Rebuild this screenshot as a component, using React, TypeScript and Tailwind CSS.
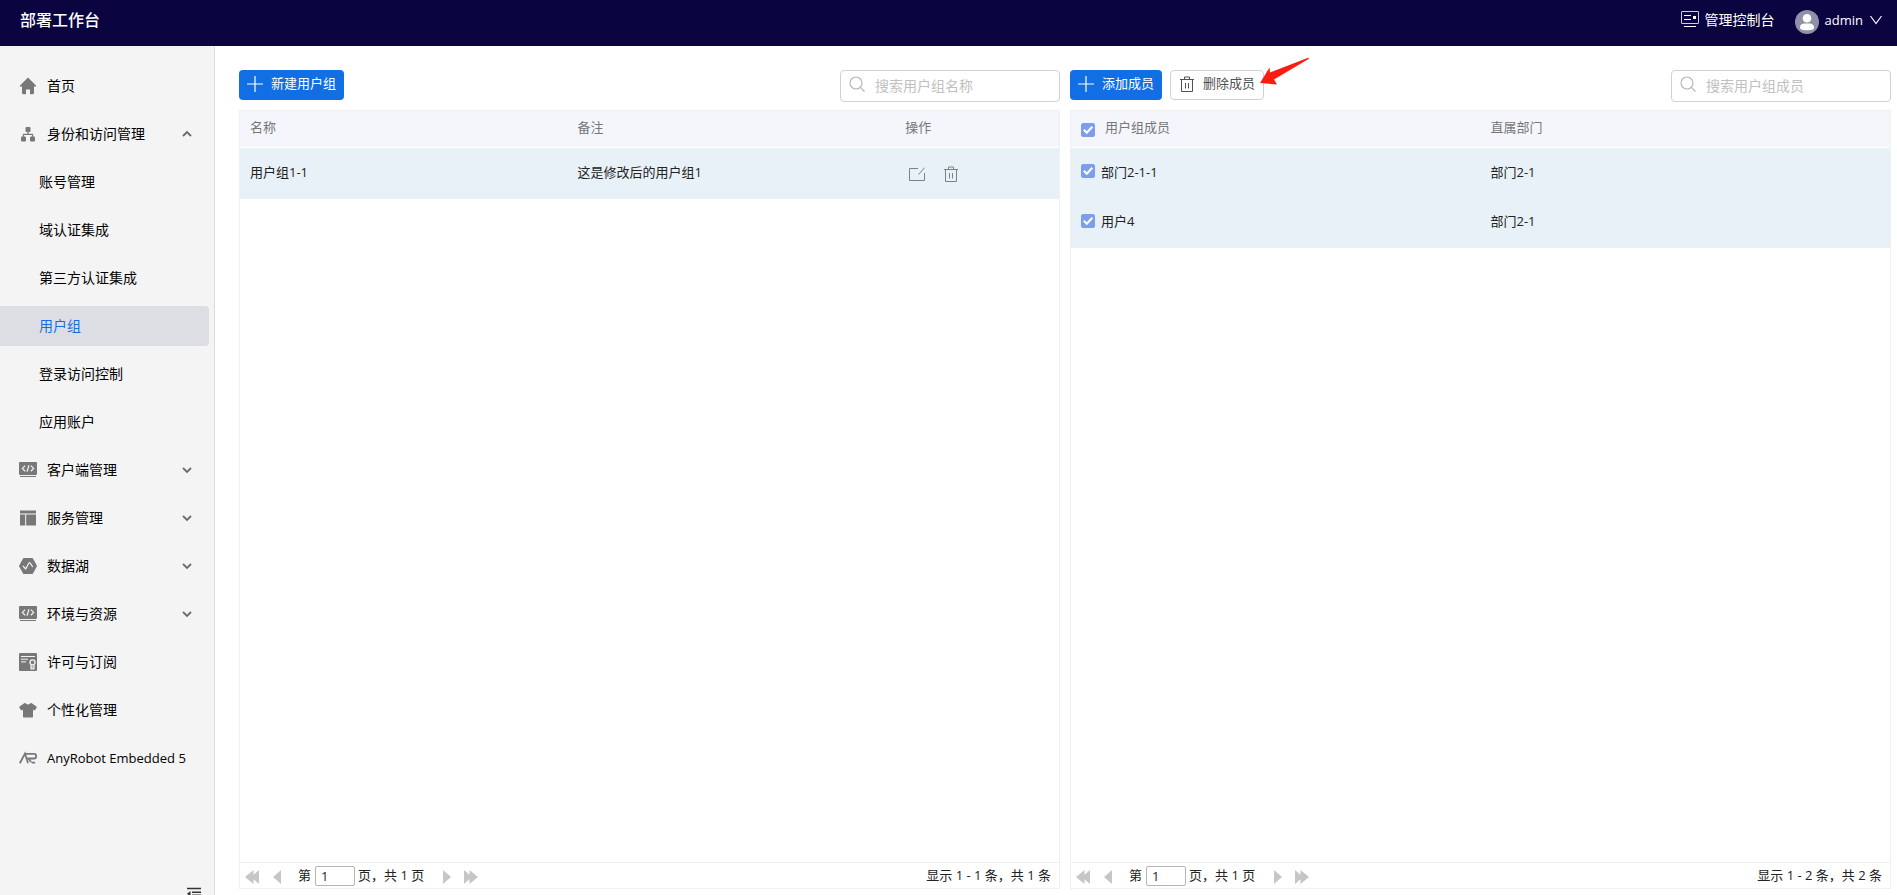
import React, { useState } from 'react';

type IconProps = { className?: string };

const svg = (size: number, className?: string) => ({
  width: size,
  height: size,
  viewBox: `0 0 ${size} ${size}`,
  className: `shrink-0 ${className ?? ''}`,
  'aria-hidden': true,
});

const HomeIcon = () => (
  <svg {...svg(18)} fill="currentColor">
    <path d="M9 .5 1 8.6c-.3.4-.2 1 .4 1H3V16c0 .7.4 1.2 1 1.2h3V12.4h4v4.800h3c.6 0 1-.5 1-1.2V9.600h1.600c.6 0 .7-.6.4-1z" />
  </svg>
);
const OrgIcon = () => (
  <svg {...svg(18)} fill="currentColor">
    <rect x="6.500" y="2" width="5" height="5" rx="1" />
    <rect x="2" y="11.500" width="5" height="5" rx="1" />
    <rect x="11" y="11.500" width="5" height="5" rx="1" />
    <path d="M9 6v3.300M4.500 12V9.300h9V12" fill="none" stroke="currentColor" strokeWidth="1.200" />
  </svg>
);
const CodeIcon = () => (
  <svg {...svg(18)} fill="none">
    <rect y="1" width="18" height="13" rx="1" fill="currentColor" />
    <path d="M1 15.500h16" stroke="currentColor" strokeWidth="1" />
    <path d="M6.200 4.600 3.300 7.400l2.900 2.800M11.800 4.600l2.900 2.800-2.900 2.800M10 4.200 8 10.700" stroke="#f4f4f4" strokeWidth="1.200" />
  </svg>
);
const LayoutIcon = () => (
  <svg {...svg(18)} fill="currentColor">
    <path d="M1 1.500h16v3H1zM1 5.600h5.200v11H1zM7.200 5.600H17v11H7.200z" />
  </svg>
);
const LakeIcon = () => (
  <svg {...svg(18)} fill="none">
    <path d="M5 1h8c.5 0 .8.2 1 .6l3.700 6.600c.3.5.3 1 0 1.500L14 16.400c-.2.4-.5.6-1 .6H5c-.5 0-.8-.2-1-.6L.3 9.700c-.3-.5-.3-1 0-1.500L4 1.600C4.200 1.200 4.500 1 5 1z" fill="currentColor" />
    <path d="m4 9 2.700 3L10 5.800c.2-.4.7-.4 1 0L13.800 10" stroke="#f4f4f4" strokeWidth="1.200" />
  </svg>
);
const LicenseIcon = () => (
  <svg {...svg(18)} fill="none">
    <rect width="18" height="18" rx="1" fill="currentColor" />
    <path d="M2 3.500h14M2 6.200h7M2 8.900h5" stroke="#f4f4f4" strokeWidth="1" />
    <circle cx="13.500" cy="9.300" r="2.500" stroke="#f4f4f4" strokeWidth="1.300" />
    <path d="M12 11.500v4.300h3v-4.300M12 14h3" stroke="#f4f4f4" strokeWidth="1.200" />
  </svg>
);
const ShirtIcon = () => (
  <svg {...svg(18)} fill="currentColor">
    <path d="M5.500 2 .6 5.400c-.5.3-.6.8-.3 1.200l1.600 2.500c.2.4.6.4 1 .2L4 8.700V15.500c0 .6.4 1 1 1h8c.6 0 1-.4 1-1V8.700l1.100.6c.4.2.8.2 1-.2l1.600-2.500c.3-.4.2-.9-.3-1.200L12.500 2c-.8 0-1.300.2-1.700.7-.9.9-2.700.9-3.600 0C6.800 2.200 6.300 2 5.500 2z" />
  </svg>
);
const RobotIcon = () => (
  <svg {...svg(18)} fill="none" stroke="currentColor" strokeWidth="1.800">
    <path d="M.8 14.300 6 4.600 9 14.300M6 4.900h9.300c2.400 0 2.400 4.600 0 4.600H9.500l2.500 3.500M12.500 13.600h3.700" />
  </svg>
);
const Chevron = ({ up }: { up?: boolean }) => (
  <svg {...svg(10)} fill="none" stroke="#6b6b6b" strokeWidth="1.800">
    <path d={up ? 'M1 7l4-4 4 4' : 'M1 3l4 4 4-4'} />
  </svg>
);
const ConsoleIcon = () => (
  <svg {...svg(18)} fill="none" stroke="#fff" strokeWidth="1">
    <rect x=".5" y=".5" width="17" height="12" rx=".5" stroke="#cfcfdc" />
    <path d="M3 4.500h7M3 8.500h7M3 15.500h12" />
    <rect x="12" y="5" width="3" height="3" fill="#fff" stroke="none" />
  </svg>
);
const PlusIcon = () => (
  <svg {...svg(16)} fill="none" stroke="#fff" strokeWidth="1.200">
    <path d="M8 0v16M0 8h16" />
  </svg>
);
const TrashIcon = ({ className }: IconProps) => (
  <svg {...svg(16, className)} fill="none" stroke="currentColor" strokeWidth="1">
    <path d="M1 3.500h14M5.500 3.500V1h5v2.500M2.500 3.500V15.500h11V3.500M6.500 7v5.500M9.500 7v5.500" />
  </svg>
);
const EditIcon = () => (
  <svg {...svg(16)} fill="none" stroke="currentColor" strokeWidth="1">
    <path d="M9 2.500H.5v12h15V7M9.500 8.500l6.300-7" />
  </svg>
);
const SearchIcon = ({ className }: IconProps) => (
  <svg {...svg(16, className)} fill="none" stroke="#b5b5b5" strokeWidth="1.100">
    <circle cx="7" cy="7" r="6" />
    <path d="m11.300 11.300 4.200 4.200" />
  </svg>
);
const CollapseIcon = () => (
  <svg {...svg(16)} fill="none" stroke="#333" strokeWidth="1.400">
    <path d="M1 1.500h14M6 5.300h9M6 8.300h9M1 12.500h14" />
    <path d="M1 6.800 4.500 4v5.600z" fill="#333" stroke="none" />
  </svg>
);
const PagerArrow = ({ double, flip }: { double?: boolean; flip?: boolean }) => (
  <svg width={double ? 14 : 8} height="14" viewBox={double ? '0 0 14 14' : '0 0 8 14'} className={flip ? 'rotate-180' : ''} fill="#c6c6c6" aria-hidden>
    <path d={double ? 'M8.500 0v14L0 7zM14 0v14L6 7z' : 'M8 0v14L0 7z'} />
  </svg>
);

type NavEntry = { label: string; icon: () => React.ReactElement; open?: boolean; children?: string[]; group?: boolean; latin?: boolean };

const nav: NavEntry[] = [
  { label: '首页', icon: HomeIcon },
  {
    label: '身份和访问管理',
    icon: OrgIcon,
    group: true,
    open: true,
    children: ['账号管理', '域认证集成', '第三方认证集成', '用户组', '登录访问控制', '应用账户'],
  },
  { label: '客户端管理', icon: CodeIcon, group: true },
  { label: '服务管理', icon: LayoutIcon, group: true },
  { label: '数据湖', icon: LakeIcon, group: true },
  { label: '环境与资源', icon: CodeIcon, group: true },
  { label: '许可与订阅', icon: LicenseIcon },
  { label: '个性化管理', icon: ShirtIcon },
  { label: 'AnyRobot Embedded 5', icon: RobotIcon, latin: true },
];

function Sidebar() {
  return (
    <aside className="flex w-[215px] shrink-0 flex-col overflow-hidden border-r border-[#dcdcdc] bg-[#f4f4f4] pt-5 text-sm text-black">
      <nav className="flex flex-col gap-2 pr-[5px]">
        {nav.map(({ label, icon: Icon, group, open, children, latin }) => (
          <React.Fragment key={label}>
            <a href="#" className="flex h-10 items-center gap-[10px] rounded-r-sm pr-[17px] pl-[19px] whitespace-nowrap">
              <span className="text-[#787878]"><Icon /></span>
              <span className={latin ? 'flex-1 text-[13px]' : 'flex-1'}>{label}</span>
              {group && <Chevron up={open} />}
            </a>
            {children?.map((child) => (
              <a
                key={child}
                href="#"
                aria-current={child === '用户组' ? 'page' : undefined}
                className={
                  child === '用户组'
                    ? 'flex h-10 items-center rounded-r-sm bg-[#dddee3] pl-[39px] text-[#126ee3]'
                    : 'flex h-10 items-center rounded-r-sm pl-[39px]'
                }
              >
                {child}
              </a>
            ))}
          </React.Fragment>
        ))}
      </nav>
      <button type="button" aria-label="收起" className="mt-auto -mb-2 mr-3 self-end">
        <CollapseIcon />
      </button>
    </aside>
  );
}

function SearchBox({ label }: { label: string }) {
  return (
    <label className="ml-auto flex h-8 w-[220px] items-center gap-[10px] rounded border border-[#d0d0da] px-2 text-sm">
      <SearchIcon className="-mt-1" />
      <input type="search" aria-label={label} placeholder={label} className="min-w-0 flex-1 bg-transparent outline-none placeholder:text-[#c0c0c0]" />
    </label>
  );
}

function Check({ label, className }: { label: string; className?: string }) {
  const [on, setOn] = useState(true);
  return (
    <span className={`relative flex size-[14px] shrink-0 ${className ?? ''}`}>
      <input
        type="checkbox"
        aria-label={label}
        checked={on}
        onChange={() => setOn(!on)}
        className="size-[14px] appearance-none rounded-xs border border-[#7c9fec] bg-white checked:bg-[#7c9fec]"
      />
      {on && (
        <svg width="14" height="14" viewBox="0 0 14 14" className="pointer-events-none absolute inset-0" fill="none" stroke="#fff" strokeWidth="2" aria-hidden>
          <path d="m2.800 6.800 3 3 5.500-6" />
        </svg>
      )}
    </span>
  );
}

function Pager({ summary, label }: { summary: string; label: string }) {
  return (
    <div className="flex h-[26px] items-center border-t border-[#f0f0f0] pr-2 pl-[5px] text-[13px] text-[#222]">
      <button type="button" aria-label="首页" className="mr-[14px] pt-[2px]"><PagerArrow double /></button>
      <button type="button" aria-label="上一页" className="mr-[17px] pt-[2px]"><PagerArrow /></button>
      <label className="flex items-center gap-1">
        <span>第</span>
        <input aria-label={label} defaultValue="1" className="h-5 w-10 rounded-xs border border-[#b5b5b5] px-[5px] outline-none" />
      </label>
      <span className="ml-[3px] whitespace-nowrap">页，共 1 页</span>
      <button type="button" aria-label="下一页" className="ml-[19px] pt-[2px]"><PagerArrow flip /></button>
      <button type="button" aria-label="末页" className="ml-[13px] pt-[2px]"><PagerArrow double flip /></button>
      <span className="ml-auto whitespace-nowrap">{summary}</span>
    </div>
  );
}

const primary = 'flex h-[30px] items-center gap-2 rounded bg-[#126ee3] px-2 pb-[2px] text-[13px] whitespace-nowrap text-white';
const th = 'pb-[2px] pl-[10px] text-left font-normal';

export default function App() {
  return (
    <div className="flex h-screen flex-col overflow-hidden bg-white font-['Open_Sans','Noto_Sans_CJK_SC',sans-serif]">
      <header className="flex h-[46px] shrink-0 items-center bg-[#0a0440] pr-[14px] pl-5 text-sm text-white">
        <h1 className="-mt-[6px] text-base font-medium">部署工作台</h1>
        <a href="#" className="-mt-[6px] ml-auto flex items-center gap-[6px]">
          <ConsoleIcon />
          管理控制台
        </a>
        <button type="button" className="-mt-[2px] ml-5 flex items-center gap-[6px]">
          <svg width="24" height="24" viewBox="0 0 24 24" aria-hidden>
            <circle cx="12" cy="12" r="12" fill="#8f91a8" />
            <circle cx="12" cy="8.200" r="4.300" fill="#fff" />
            <path d="M5 17.500c0-3 2-4 4.500-4h5c2.500 0 4.500 1 4.500 4 0 1.800-2 2.800-7 2.800s-7-1-7-2.800z" fill="#fff" />
          </svg>
          <span className="-mt-1 text-[13px]">admin</span>
          <svg width="14" height="10" viewBox="0 0 14 10" className="-mt-1" fill="none" stroke="#fff" strokeWidth="1.200" aria-hidden>
            <path d="m1.500 1 5.500 7.500L12.500 1" />
          </svg>
        </button>
      </header>
      <div className="flex min-h-0 flex-1">
        <Sidebar />
        <main className="grid min-w-0 flex-1 grid-cols-2 gap-[10px] pt-6 pr-[6px] pb-[6px] pl-6">
          <section className="flex min-w-0 flex-col gap-2">
            <div className="flex h-8 items-start">
              <button type="button" className={primary}><PlusIcon />新建用户组</button>
              <SearchBox label="搜索用户组名称" />
            </div>
            <div className="flex flex-1 flex-col border border-[#f0f0f0]">
              <table className="w-full table-fixed text-[13px]">
                <thead>
                  <tr className="h-9 border-b border-white bg-[#f5f6fb] text-[#777]">
                    <th className={`w-2/5 ${th}`}>名称</th>
                    <th className={`w-2/5 ${th}`}>备注</th>
                    <th className={`w-1/5 ${th}`}>操作</th>
                  </tr>
                </thead>
                <tbody>
                  <tr className="h-[51px] border-b border-[#f0f0f0] bg-[#e8f1f7] text-[#222]">
                    <td className="pl-[10px]">用户组1-1</td>
                    <td className="pl-[10px]">这是修改后的用户组1</td>
                    <td className="pl-[14px]">
                      <div className="flex gap-[18px] pt-[2px] text-[#808080]">
                        <button type="button" aria-label="编辑"><EditIcon /></button>
                        <button type="button" aria-label="删除"><TrashIcon /></button>
                      </div>
                    </td>
                  </tr>
                </tbody>
              </table>
              <div className="mt-auto"><Pager label="用户组页码" summary="显示 1 - 1 条，共 1 条" /></div>
            </div>
          </section>
          <section className="flex min-w-0 flex-col gap-2">
            <div className="flex h-8 items-start">
              <button type="button" className={primary}><PlusIcon />添加成员</button>
              <button type="button" className="relative ml-2 flex h-[30px] items-center gap-2 rounded border border-[#d0d0da] px-2 pb-[2px] text-[13px] whitespace-nowrap text-[#505050]">
                <TrashIcon />
                删除成员
                <svg width="52" height="30" viewBox="0 0 52 30" className="pointer-events-none absolute -top-[14px] left-[89px]" fill="#fb1c0f" aria-hidden>
                  <path d="M0 26 9.500 10.500 10 15.500 47.500 1c1.500-.5 2 .4 1 1L14 22.500l3 5z" />
                </svg>
              </button>
              <SearchBox label="搜索用户组成员" />
            </div>
            <div className="flex flex-1 flex-col border border-[#f0f0f0]">
              <table className="w-full table-fixed text-[13px]">
                <thead>
                  <tr className="h-9 border-b border-white bg-[#f5f6fb] text-[#777]">
                    <th className={`w-1/2 ${th}`}>
                      <div className="flex items-center gap-[10px]">
                        <Check label="全选" className="mt-1" />
                        用户组成员
                      </div>
                    </th>
                    <th className={`w-1/2 ${th}`}>直属部门</th>
                  </tr>
                </thead>
                <tbody>
                  {['部门2-1-1', '用户4'].map((name) => (
                    <tr key={name} className="h-[50px] bg-[#e8f1f7] text-[#222] last:border-b last:border-[#f0f0f0]">
                      <td className="pl-[10px]">
                        <div className="flex items-center gap-[6px]">
                          <Check label={name} className="-mt-[2px]" />
                          {name}
                        </div>
                      </td>
                      <td className="pl-[10px]">部门2-1</td>
                    </tr>
                  ))}
                </tbody>
              </table>
              <div className="mt-auto"><Pager label="成员页码" summary="显示 1 - 2 条，共 2 条" /></div>
            </div>
          </section>
        </main>
      </div>
    </div>
  );
}
